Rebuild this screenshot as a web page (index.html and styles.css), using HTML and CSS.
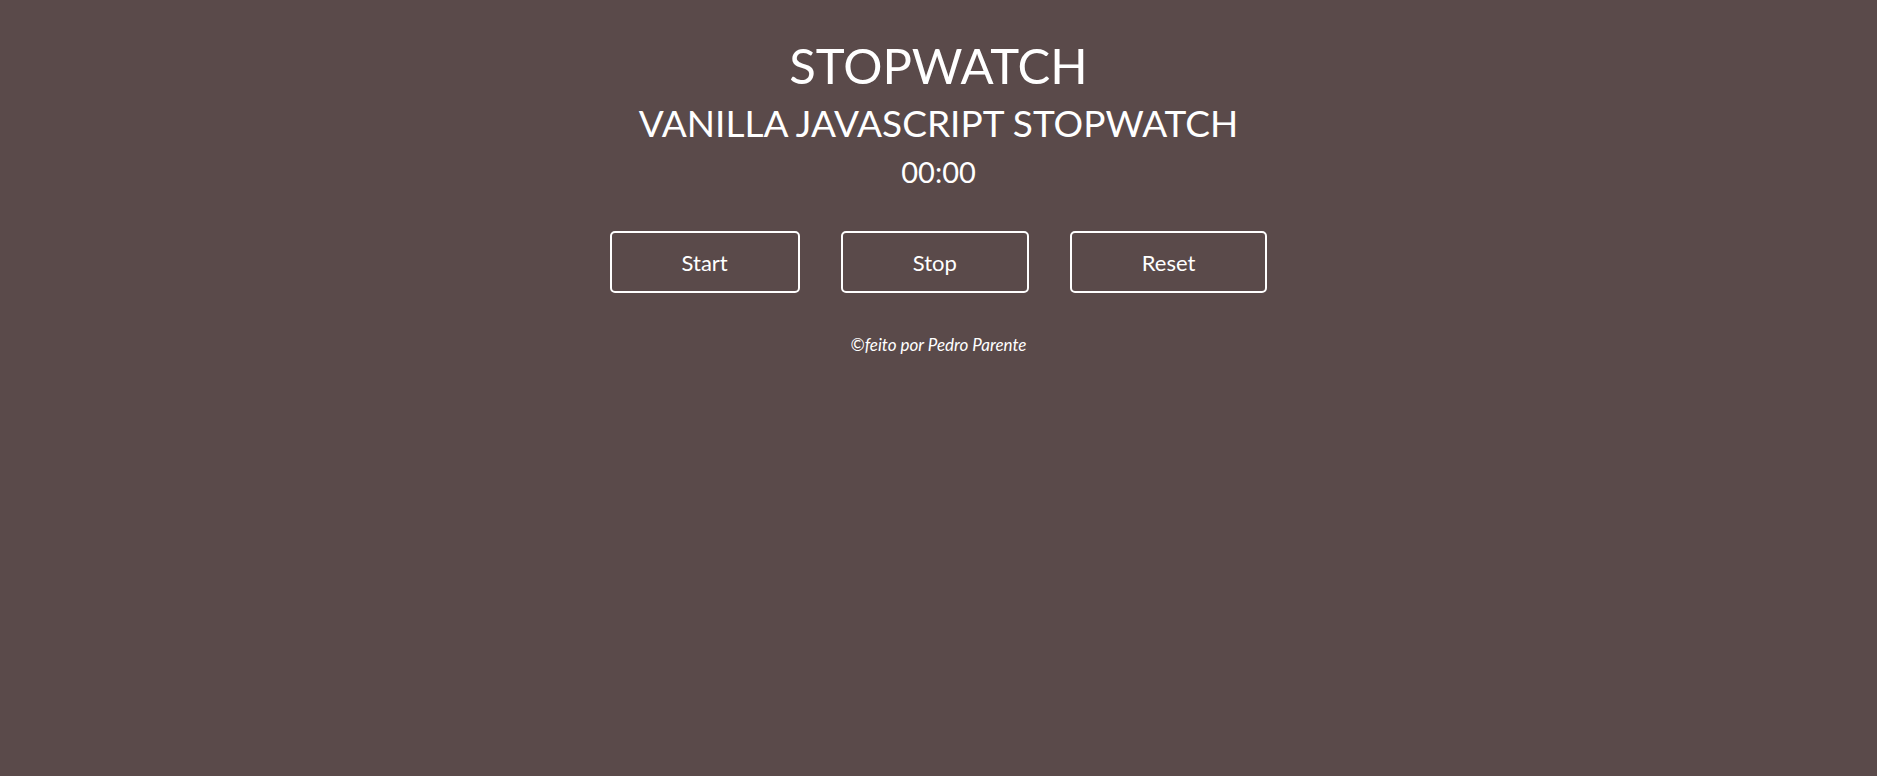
FILE: index.html
```html
<!DOCTYPE html>
<html lang="pt">
<head>
<meta charset="utf-8">
<title>Stopwatch</title>
<link rel="stylesheet" href="styles.css">
</head>
<body>
<main class="wrapper">
  <h1 class="title">STOPWATCH</h1>
  <h2 class="subtitle">VANILLA JAVASCRIPT STOPWATCH</h2>
  <p class="time"><span class="seconds">00</span>:<span class="tens">00</span></p>
  <div class="controls">
    <button class="btn" type="button">Start</button>
    <button class="btn" type="button">Stop</button>
    <button class="btn" type="button">Reset</button>
  </div>
  <footer class="credit">©feito por Pedro Parente</footer>
</main>
</body>
</html>
```

FILE: styles.css
```css
html, body {
  margin: 0;
  padding: 0;
}
body {
  background: #5a4a4a;
  color: #ffffff;
  font-family: "Lato", "Open Sans", "Noto Sans", sans-serif;
  width: 1877px;
  height: 776px;
}
.wrapper {
  display: flex;
  flex-direction: column;
  align-items: center;
  text-align: center;
  padding-top: 35px;
}
.title {
  margin: 0 0 6px;
  font-weight: 400;
  font-size: 49px;
  line-height: 60px;
}
.subtitle {
  margin: 0 0 5px;
  font-weight: 400;
  font-size: 37px;
  line-height: 44px;
}
.time {
  margin: 0;
  font-size: 29px;
  line-height: 44px;
}
.controls {
  display: flex;
  gap: 41px;
  margin-top: 37px;
}
.btn {
  font-family: inherit;
  font-size: 22px;
  color: #ffffff;
  background: transparent;
  border: 2px solid #ffffff;
  border-radius: 5px;
  padding: 1px 70px 0;
  height: 62px;
}
.credit {
  margin-top: 41px;
  font-size: 17px;
  font-style: italic;
}
```
